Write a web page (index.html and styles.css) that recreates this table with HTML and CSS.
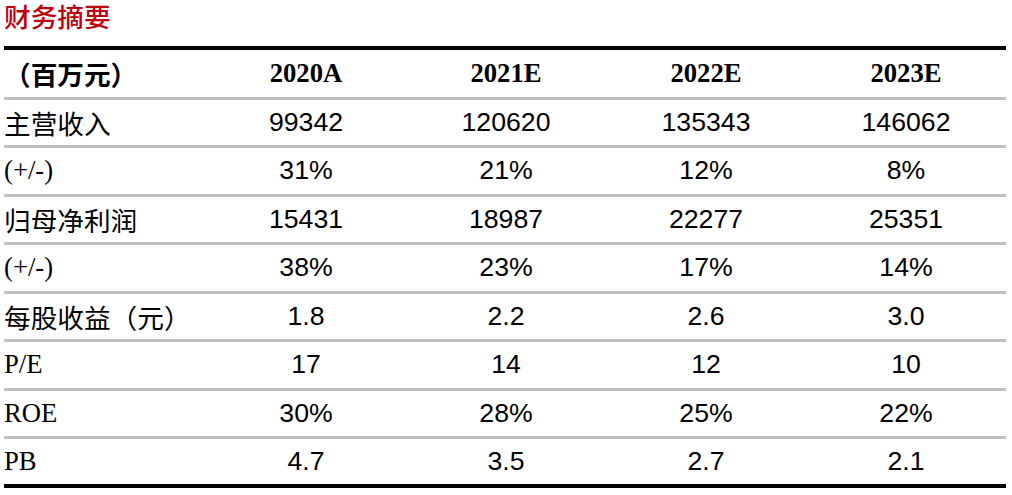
FILE: index.html
```html
<!DOCTYPE html>
<html lang="zh">
<head>
<meta charset="utf-8">
<title>财务摘要</title>
<link rel="stylesheet" href="styles.css">
</head>
<body>
<div class="page">
  <h1 class="title">财务摘要</h1>
  <table class="fin">
    <colgroup>
      <col class="c-label"><col class="c-data"><col class="c-data"><col class="c-data"><col class="c-data">
    </colgroup>
    <thead>
      <tr class="head">
        <th class="label cjk-b">（百万元）</th>
        <th>2020A</th><th>2021E</th><th>2022E</th><th>2023E</th>
      </tr>
    </thead>
    <tbody>
      <tr><td class="label cjk">主营收入</td><td>99342</td><td>120620</td><td>135343</td><td>146062</td></tr>
      <tr><td class="label serif">(+/-)</td><td>31%</td><td>21%</td><td>12%</td><td>8%</td></tr>
      <tr><td class="label cjk">归母净利润</td><td>15431</td><td>18987</td><td>22277</td><td>25351</td></tr>
      <tr><td class="label serif">(+/-)</td><td>38%</td><td>23%</td><td>17%</td><td>14%</td></tr>
      <tr><td class="label cjk">每股收益（元）</td><td>1.8</td><td>2.2</td><td>2.6</td><td>3.0</td></tr>
      <tr><td class="label serif">P/E</td><td>17</td><td>14</td><td>12</td><td>10</td></tr>
      <tr><td class="label serif">ROE</td><td>30%</td><td>28%</td><td>25%</td><td>22%</td></tr>
      <tr class="last"><td class="label serif">PB</td><td>4.7</td><td>3.5</td><td>2.7</td><td>2.1</td></tr>
    </tbody>
  </table>
</div>
</body>
</html>
```
FILE: styles.css
```css
html, body {
  margin: 0;
  padding: 0;
  background: #ffffff;
}
.page {
  padding: 0 6px 0 4px;
}
.title {
  margin: 0;
  height: 46px;
  line-height: 31px;
  font-family: "Noto Sans CJK SC", sans-serif;
  font-weight: 500;
  font-size: 26.67px;
  color: #c00010;
}
.fin {
  width: 1002px;
  border-collapse: collapse;
  table-layout: fixed;
  border-top: 4px solid #000;
  border-bottom: 4px solid #000;
}
.c-label { width: 202px; }
.c-data { width: 200px; }
.fin th, .fin td {
  padding: 0;
  text-align: center;
  vertical-align: middle;
  color: #000;
  font-size: 26.67px;
}
.fin tr {
  border-bottom: 3px solid #c0c0c0;
}
.fin tr.last {
  border-bottom: 4px solid #000;
}
.fin tr.head { height: 50px; }
.fin tbody tr { height: 48.5px; }
.fin th {
  font-family: "Liberation Serif", serif;
  font-weight: 700;
}
.fin td {
  font-family: "Liberation Sans", sans-serif;
  font-weight: 400;
}
.fin .label {
  text-align: left;
}
.fin .cjk {
  font-family: "Noto Sans CJK SC", sans-serif;
}
.fin .cjk-b {
  font-family: "Noto Sans CJK SC", sans-serif;
  font-weight: 700;
}
.fin .serif {
  font-family: "Liberation Serif", serif;
}
```
